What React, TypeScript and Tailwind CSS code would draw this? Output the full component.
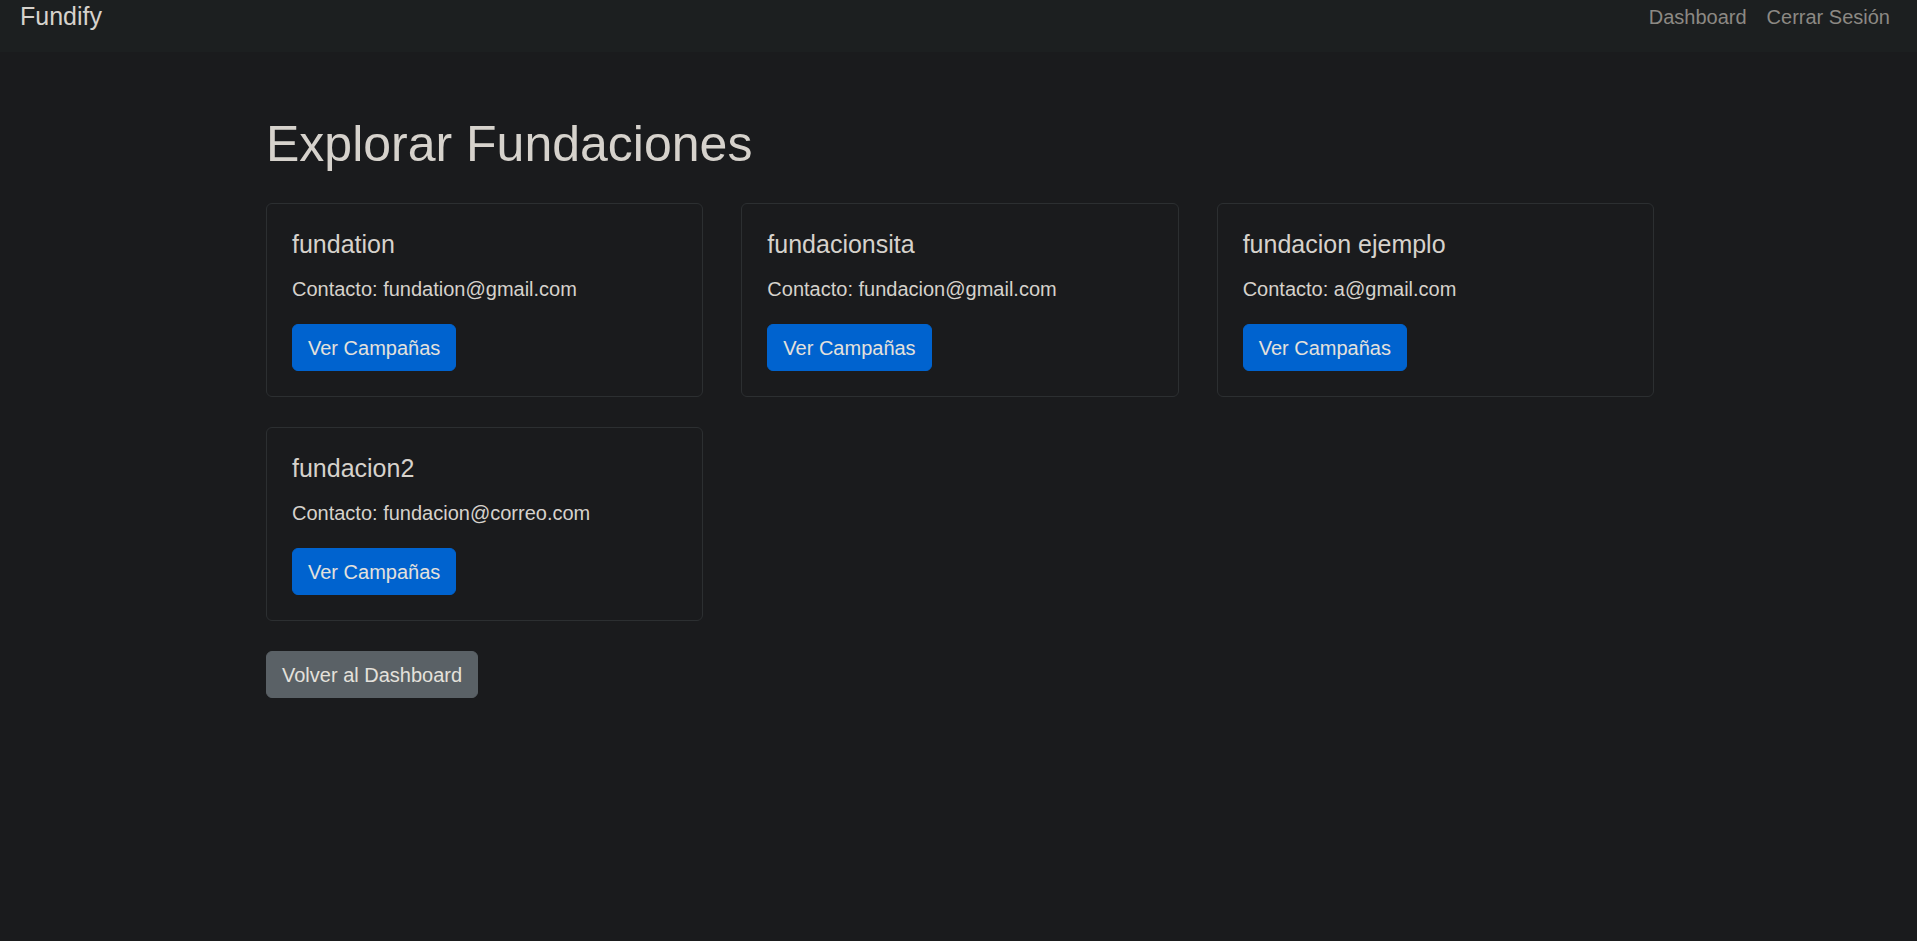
const fundaciones = [
    { id: 1, nombre: 'fundation', email: 'fundation@gmail.com' },
    { id: 2, nombre: 'fundacionsita', email: 'fundacion@gmail.com' },
    { id: 3, nombre: 'fundacion ejemplo', email: 'a@gmail.com' },
    { id: 4, nombre: 'fundacion2', email: 'fundacion@correo.com' },
];

function FundacionCard({ nombre, email }: { nombre: string, email: string }) {
    return (
        <div className="rounded-[6px] border border-[#2c2f31] bg-[#1a1b1d]">
            <div className="p-[25px]">
                <h5 className="mb-[15px] text-[25px] leading-[30px] text-[#d6d2cc]">{nombre}</h5>
                <p className="mb-[20px] text-[20px] leading-[30px] text-[#d6d2cc]">Contacto: {email}</p>
                <button className="h-[47px] rounded-[6px] border border-[#0063cf] bg-[#0063cf] px-[15px] text-[20px] leading-[30px] text-[#e4e1dc]">
                    Ver Campañas
                </button>
            </div>
        </div>
    );
}

export default function App() {
    return (
        <div className="min-h-screen bg-[#1a1b1d] font-['Liberation_Sans',Arial,sans-serif]">
            <nav className="flex h-[52px] items-start justify-between bg-[#1c1f20] pl-[20px] pr-[27px]">
                <a className="mt-[1px] text-[25px] leading-[30px] text-[#d6d2cc]">Fundify</a>
                <div className="mt-[2px] flex gap-[20px] text-[20px] leading-[30px] text-[#8c8984]">
                    <a>Dashboard</a>
                    <a>Cerrar Sesión</a>
                </div>
            </nav>

            <div className="ml-[266px] w-[1388px] pt-[62px]">
                <h1 className="mb-[29px] text-[50px] leading-[60px] text-[#d6d2cc]">Explorar Fundaciones</h1>
                <div className="grid grid-cols-3 gap-x-[38px] gap-y-[30px]">
                    {fundaciones.map((f) => (
                        <FundacionCard key={f.id} nombre={f.nombre} email={f.email} />
                    ))}
                </div>
                <button className="mt-[30px] h-[47px] rounded-[6px] border border-[#5a6166] bg-[#5a6166] px-[15px] text-[20px] leading-[30px] text-[#e4e1dc]">
                    Volver al Dashboard
                </button>
            </div>
        </div>
    );
}
